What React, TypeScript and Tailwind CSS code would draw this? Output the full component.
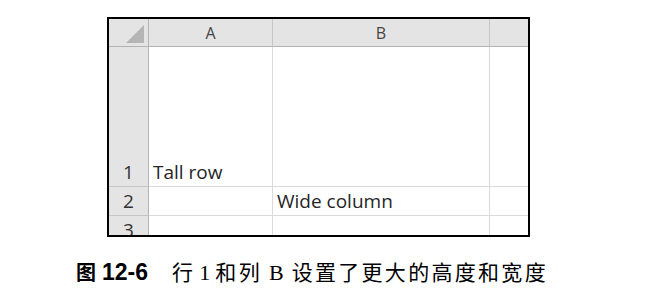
import React from "react";

const hdr = "bg-[#e4e4e4] border-b border-b-[#b3b3b3] border-r border-r-[#c6c6c6] flex items-end justify-center pb-[1px] text-[16px] leading-normal text-[#444]";
const rowHdr = "bg-[#e4e4e4] border-b border-b-[#c6c6c6] border-r border-r-[#b3b3b3] flex items-end justify-center text-[19px] leading-normal text-[#333]";
const cell = "border-b border-b-[#dadada] border-r border-r-[#dadada] flex items-end pl-[4px] text-[19px] leading-normal text-[#262626] whitespace-nowrap";
const cellLast = "border-b border-b-[#dadada] flex items-end";

export default function App() {
  return (
    <div className="w-[657px] h-[307px] bg-white overflow-hidden pt-[17px]">
      <div className="ml-[107px] w-[423px] h-[220px] border-2 border-black overflow-hidden font-['Open_Sans',sans-serif]">
        <div className="grid grid-cols-[40px_124px_217px_38px] grid-rows-[28px_140px_29px_29px]">
          <div className="bg-[#e4e4e4] border-b border-b-[#b3b3b3] border-r border-r-[#b3b3b3] flex items-end justify-end pr-[4px] pb-[3px]">
            <svg width="18" height="18" viewBox="0 0 18 18">
              <polygon points="18,0 18,18 0,18" fill="#b5b5b5" />
            </svg>
          </div>
          <div className={hdr}>A</div>
          <div className={hdr}>B</div>
          <div className="bg-[#e4e4e4] border-b border-b-[#b3b3b3]" />

          <div className={rowHdr}>1</div>
          <div className={cell}>Tall row</div>
          <div className={cell}></div>
          <div className={cellLast}></div>

          <div className={rowHdr}>2</div>
          <div className={cell}></div>
          <div className={cell}>Wide column</div>
          <div className={cellLast}></div>

          <div className={rowHdr}>3</div>
          <div className={cell}></div>
          <div className={cell}></div>
          <div className={cellLast}></div>
        </div>
      </div>

      <div className="flex items-baseline pl-[76px] mt-[24px] text-black leading-none">
        <span className="font-['Noto_Sans_CJK_SC',sans-serif] font-bold text-[20px]">图</span>
        <span className="ml-[6px] font-['Liberation_Sans',sans-serif] font-bold text-[23px]">12-6</span>
        <span className="ml-[24px] font-['Noto_Sans_CJK_SC',sans-serif] text-[21px] tracking-[2.3px]">行</span>
        <span className="ml-[4px] font-['Liberation_Serif',serif] text-[22px]">1</span>
        <span className="ml-[5px] font-['Noto_Sans_CJK_SC',sans-serif] text-[21px] tracking-[2.3px]">和列</span>
        <span className="ml-[7px] font-['Liberation_Serif',serif] text-[22px]">B</span>
        <span className="ml-[8px] font-['Noto_Sans_CJK_SC',sans-serif] text-[21px] tracking-[2.3px]">设置了更大的高度和宽度</span>
      </div>
    </div>
  );
}
